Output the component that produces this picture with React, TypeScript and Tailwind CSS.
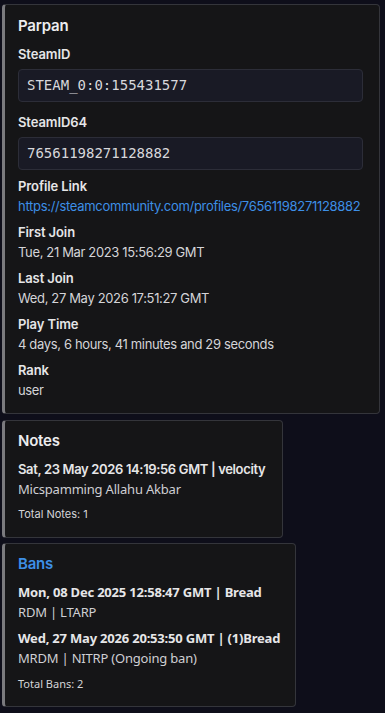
import React from "react";

const font = { fontFamily: "Inter, 'Noto Sans', sans-serif" };
const alt = { fontFamily: "'Noto Sans', 'Open Sans', sans-serif" };

function Field({ label, children }: { label: string; children: React.ReactNode }) {
  return (
    <div className="mt-[6px]">
      <div className="text-[13px] leading-[20px] font-semibold tracking-[-0.1px] text-[#e6e6e8]">{label}</div>
      <div className="text-[13px] leading-[20px] tracking-[-0.35px] text-[#d4d4d8]">{children}</div>
    </div>
  );
}

function IdField({ label, value, top }: { label: string; value: string; top: string }) {
  return (
    <div className={top}>
      <div className="text-[13px] leading-[20px] font-semibold tracking-[-0.1px] text-[#e6e6e8]">{label}</div>
      <div
        className="mt-[5px] h-[33px] flex items-center px-[8px] rounded-[4px] border border-[#2c2d38] bg-[#191a25] text-[14px] text-[#d8d8dc]"
        style={{ fontFamily: "'DejaVu Sans Mono', monospace" }}
      >
        {value}
      </div>
    </div>
  );
}

export default function App() {
  const bans = [
    { head: "Mon, 08 Dec 2025 12:58:47 GMT | Bread", reason: "RDM | LTARP" },
    { head: "Wed, 27 May 2026 20:53:50 GMT | (1)Bread", reason: "MRDM | NITRP (Ongoing ban)" },
  ];

  return (
    <div className="min-h-[713px] w-[385px] bg-[#0e0e1a] pt-[4px] pl-[2px] overflow-hidden flex flex-col items-start" style={font}>
      {/* Player card */}
      <div className="w-[378px] flex flex-col rounded-[4px] border border-[#34353b] border-l-[3px] border-l-[#7a7a7e] bg-[#151517] pl-[13px] pr-[16px] pt-[9px] pb-[13px]">
        <div className="text-[15px] leading-[24px] font-semibold tracking-[-0.2px] text-[#ececee]">Parpan</div>
        <IdField top="mt-[6px]" label="SteamID" value="STEAM_0:0:155431577" />
        <IdField top="mt-[10px]" label="SteamID64" value="76561198271128882" />
        <Field label="Profile Link">
          <span className="text-[#3d8fe6] tracking-[-0.3px]">https://steamcommunity.com/profiles/76561198271128882</span>
        </Field>
        <Field label="First Join">Tue, 21 Mar 2023 15:56:29 GMT</Field>
        <Field label="Last Join">Wed, 27 May 2026 17:51:27 GMT</Field>
        <Field label="Play Time">4 days, 6 hours, 41 minutes and 29 seconds</Field>
        <Field label="Rank">user</Field>
      </div>

      {/* Notes */}
      <div className="mt-[6px] w-[281px] flex flex-col rounded-[4px] border border-[#34353b] border-l-[3px] border-l-[#7a7a7e] bg-[#151517] pl-[13px] pr-[12px] pt-[8px] pb-[15px]">
        <div className="text-[15px] leading-[24px] font-semibold tracking-[-0.2px] text-[#ececee]">Notes</div>
        <div className="mt-[6px] text-[13px] leading-[20px] font-semibold tracking-[-0.35px] text-[#e6e6e8]">
          Sat, 23 May 2026 14:19:56 GMT | velocity
        </div>
        <div className="text-[13px] leading-[20px] tracking-[-0.2px] text-[#cfcfd3]" style={alt}>
          Micspamming Allahu Akbar
        </div>
        <div className="mt-[7px] text-[11px] leading-[16px] text-[#d4d4d8]">Total Notes: 1</div>
      </div>

      {/* Bans */}
      <div className="mt-[5px] w-[294px] flex flex-col rounded-[4px] border border-[#34353b] border-l-[3px] border-l-[#7a7a7e] bg-[#151517] pl-[13px] pr-[12px] pt-[8px] pb-[14px]">
        <div className="text-[15px] leading-[24px] font-semibold tracking-[-0.2px] text-[#3d8fe6]">Bans</div>
        {bans.map((b, i) => (
          <div key={i} className="mt-[6px]" style={alt}>
            <div className="text-[13px] leading-[20px] font-bold tracking-[-0.2px] text-[#e6e6e8] whitespace-nowrap">{b.head}</div>
            <div className="text-[13px] leading-[20px] tracking-[-0.2px] text-[#cfcfd3]">{b.reason}</div>
          </div>
        ))}
        <div className="mt-[8px] text-[11px] leading-[16px] text-[#d4d4d8]" style={alt}>
          Total Bans: 2
        </div>
      </div>
    </div>
  );
}
